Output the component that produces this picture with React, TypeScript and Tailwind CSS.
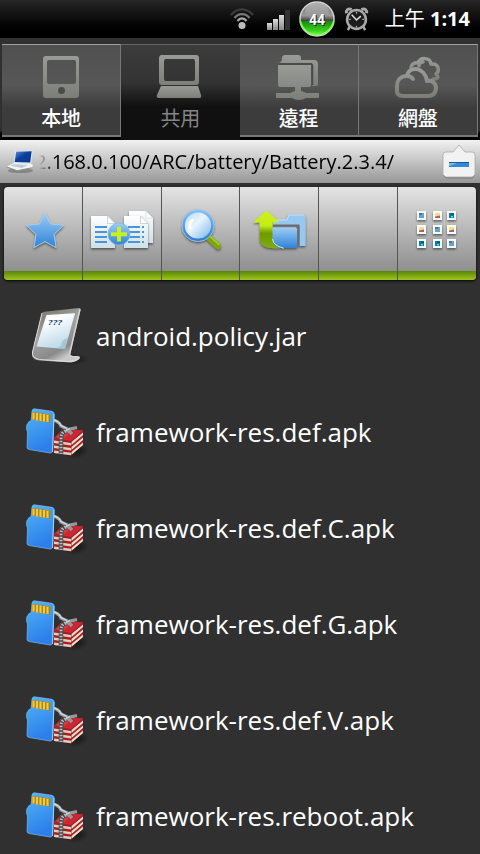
import type { ReactNode } from 'react';
import { clsx } from 'clsx';

const FONT = "font-['Open_Sans','Noto_Sans_CJK_TC',sans-serif]";
const PATH = '2.168.0.100/ARC/battery/Battery.2.3.4/';

function WifiIcon() {
  return (
    <svg width="24" height="24" viewBox="0 0 24 24" fill="none" aria-hidden="true">
      <path d="M1 8C7 0.500 17 0.500 23 8" stroke="#3c3c3c" strokeWidth="2.200" />
      <path d="M4.500 11C8.500 5.800 15.500 5.800 19.500 11" stroke="#777" strokeWidth="2.200" />
      <path d="M7.500 14C10 10.500 14 10.500 16.500 14" stroke="#aaa" strokeWidth="2.200" />
      <circle cx="12" cy="18.500" r="3.500" fill="#bdbdbd" />
    </svg>
  );
}

function SignalIcon() {
  return (
    <svg width="24" height="22" viewBox="0 0 24 22" aria-hidden="true">
      <defs>
        <linearGradient id="bars" x1="0" y1="0" x2="0" y2="1">
          <stop offset="0" stopColor="#ddd" />
          <stop offset="1" stopColor="#888" />
        </linearGradient>
      </defs>
      <rect x="1" y="15" width="5" height="7" fill="url(#bars)" />
      <rect x="7" y="11" width="5" height="11" fill="url(#bars)" />
      <rect x="13" y="7" width="5" height="15" fill="url(#bars)" />
      <rect x="19" y="2" width="5" height="20" fill="#333" />
    </svg>
  );
}

function BatteryIcon() {
  return (
    <svg width="38" height="38" viewBox="0 0 38 38" role="img" aria-label="Battery 44">
      <defs>
        <linearGradient id="orb" x1="0" y1="0" x2="0" y2="1">
          <stop offset="0" stopColor="#666" />
          <stop offset="0.400" stopColor="#999" />
          <stop offset="0.540" stopColor="#444" />
          <stop offset="0.570" stopColor="#198a0b" />
          <stop offset="0.850" stopColor="#39d51f" />
          <stop offset="1" stopColor="#8dff5b" />
        </linearGradient>
        <linearGradient id="gloss" x1="0" y1="0" x2="0" y2="1">
          <stop offset="0" stopColor="#c8c8c8" />
          <stop offset="1" stopColor="#888" />
        </linearGradient>
      </defs>
      <circle cx="19" cy="19" r="17" fill="url(#orb)" stroke="#d5d5d5" strokeWidth="1.500" />
      <path d="M2.300 21A17 17 0 0 0 35.700 21" fill="none" stroke="#7dfb55" strokeWidth="1.500" />
      <ellipse cx="19" cy="11" rx="12" ry="8.500" fill="url(#gloss)" opacity="0.750" />
      <g fontFamily="Roboto, sans-serif" fontSize="14" fontWeight="700" textAnchor="middle">
        <text x="20" y="26" fill="#222" aria-hidden="true">44</text>
        <text x="19" y="25" fill="#fff">44</text>
      </g>
    </svg>
  );
}

function AlarmIcon() {
  return (
    <svg width="25" height="26" viewBox="0 0 26 26" fill="none" stroke="#a9a9a9" aria-hidden="true">
      <path d="M2.500 7C2 4 4 1.500 8 3M23.500 7C24 4 22 1.500 18 3" strokeWidth="3" />
      <path d="M6 21l-2 3.500M20 21l2 3.500" strokeWidth="2.600" />
      <circle cx="13" cy="13.500" r="9.800" fill="#1c1c1c" strokeWidth="2.600" />
      <path d="M8 8.500l5 5.500 4.500-4" strokeWidth="1.600" stroke="#ddd" />
      <path d="M13 5.500v2M13 20v2M5 13.500h2M19 13.500h2" strokeWidth="1.300" />
    </svg>
  );
}

function Defs() {
  return (
    <svg className="absolute h-0 w-0" aria-hidden="true">
      <defs>
        <linearGradient id="metal" x1="0" y1="0" x2="0" y2="1">
          <stop offset="0" stopColor="#999b97" />
          <stop offset="1" stopColor="#7c7e7a" />
        </linearGradient>
        <linearGradient id="sky" x1="0" y1="0" x2="0" y2="1">
          <stop offset="0" stopColor="#9fcdf5" />
          <stop offset="1" stopColor="#2d83d8" />
        </linearGradient>
        <linearGradient id="sheet" x1="0" y1="0" x2="0" y2="1">
          <stop offset="0" stopColor="#ffffff" />
          <stop offset="1" stopColor="#cfe0e6" />
        </linearGradient>
        <linearGradient id="paper" x1="0.200" y1="0" x2="0.600" y2="1">
          <stop offset="0.200" stopColor="#ffffff" />
          <stop offset="1" stopColor="#b9d7e6" />
        </linearGradient>
        <linearGradient id="lime" x1="0" y1="0" x2="0" y2="1">
          <stop offset="0" stopColor="#cdf21c" />
          <stop offset="0.400" stopColor="#c4ec18" />
          <stop offset="0.600" stopColor="#6f9a00" />
          <stop offset="1" stopColor="#82ab0c" />
        </linearGradient>
        <linearGradient id="lens" x1="0" y1="0" x2="1" y2="1">
          <stop offset="0" stopColor="#b4d7f6" />
          <stop offset="0.450" stopColor="#e8f4fd" />
          <stop offset="1" stopColor="#6facea" />
        </linearGradient>
        <linearGradient id="ring" x1="0" y1="0" x2="0" y2="1">
          <stop offset="0" stopColor="#86bff2" />
          <stop offset="1" stopColor="#2b7fd6" />
        </linearGradient>
        <linearGradient id="card" x1="0" y1="0" x2="0.300" y2="1">
          <stop offset="0" stopColor="#55b4fa" />
          <stop offset="1" stopColor="#2a7fe8" />
        </linearGradient>
        <linearGradient id="stand" x1="0" y1="0" x2="0.500" y2="1">
          <stop offset="0" stopColor="#6e6a64" />
          <stop offset="0.500" stopColor="#a3a3a3" />
          <stop offset="0.850" stopColor="#8a8a8a" />
          <stop offset="1" stopColor="#c8c8c8" />
        </linearGradient>
        <linearGradient id="screen" x1="0" y1="0" x2="1" y2="1">
          <stop offset="0" stopColor="#5d8fd8" />
          <stop offset="0.450" stopColor="#0b3f9c" />
          <stop offset="1" stopColor="#0a3590" />
        </linearGradient>
        <radialGradient id="shade">
          <stop offset="0" stopColor="#000" stopOpacity="0.600" />
          <stop offset="1" stopColor="#000" stopOpacity="0" />
        </radialGradient>
        <filter id="drop" x="-20%" y="-20%" width="150%" height="150%">
          <feDropShadow dx="0" dy="1.500" stdDeviation="1" floodOpacity="0.500" />
        </filter>
      </defs>
    </svg>
  );
}

function LocalIcon() {
  return (
    <svg width="48" height="48" viewBox="0 0 48 48" aria-hidden="true">
      <path
        fill="url(#metal)"
        fillRule="evenodd"
        d="M9 3h30a3 3 0 0 1 3 3v36a3 3 0 0 1-3 3H9a3 3 0 0 1-3-3V6a3 3 0 0 1 3-3zM12 7a2 2 0 0 0-2 2v20a2 2 0 0 0 2 2h25a2 2 0 0 0 2-2V9a2 2 0 0 0-2-2z"
      />
      <circle cx="24.500" cy="37.500" r="3.500" fill="#4a4a4a" />
    </svg>
  );
}

function SharedIcon() {
  return (
    <svg width="48" height="48" viewBox="0 0 48 48" aria-hidden="true">
      <path
        fill="url(#metal)"
        fillRule="evenodd"
        d="M7 2h33a3 3 0 0 1 3 3v24a3 3 0 0 1-3 3H6a3 3 0 0 1-3-3V5a3 3 0 0 1 4-3zM10 6a2 2 0 0 0-2 2v18a2 2 0 0 0 2 2h27a2 2 0 0 0 2-2V8a2 2 0 0 0-2-2z"
      />
      <path d="M5 33h37l3 9a2 2 0 0 1-2 3H3a2 2 0 0 1-2-3z" fill="url(#metal)" />
    </svg>
  );
}

function RemoteIcon() {
  return (
    <svg width="48" height="48" viewBox="0 0 48 48" aria-hidden="true">
      <path d="M4 10q3-1 3-5 0-3 3-3h13q3 0 3 3v2h13q4 0 4 4v20q0 2-3 2h-3V10z" fill="url(#metal)" />
      <path d="M3 12h33v20q0 2-2 2H26v4q4 1 5 2h13v5H31q-3 2-7 2t-7-2H1v-5h14q2-1 5-2v-4H5q-2 0-2-2z" fill="url(#metal)" />
      <path d="M4 11h32q1.500 0 1.500 2v19" fill="none" stroke="#4a4a4a" strokeWidth="1.500" />
    </svg>
  );
}

function CloudIcon() {
  return (
    <svg width="48" height="48" viewBox="0 0 48 48" fill="none" stroke="url(#metal)" strokeLinecap="round" strokeLinejoin="round" aria-hidden="true">
      <path strokeWidth="3.500" d="M17 14c1-3 4-5 7-4 2-6 12-6 13 1 8-1 9 7 5 10 4 4 1 5-3 5M29 9q-4 0-4 4" />
      <path
        strokeWidth="4"
        d="M9 43h25c6 0 8-4 8-9-1-5-5-7-9-6C31 14 15 12 13 23 6 23 3 28 3 33v5c0 3 2 5 6 5zM13 23q4 0 6 3"
      />
    </svg>
  );
}

function LaptopIcon() {
  return (
    <svg width="30" height="26" viewBox="0 0 30 26" aria-hidden="true">
      <ellipse cx="15" cy="22" rx="13" ry="2.500" fill="#555" opacity="0.450" />
      <path d="M9.500 1.500L27.500 1 26 15 8 14z" fill="#dfe6ee" />
      <path d="M10.500 2.500L26.500 2 25 13.500 9 13z" fill="url(#screen)" />
      <path d="M8 14l18 1 2 1-1.500 3-15 3L.500 18z" fill="#f2f3f4" />
      <path d="M7.500 15.300l15 .9-6 3L4.500 17z" fill="#c3c8cc" />
      <path d="M.500 18l11 4 15-3" fill="none" stroke="#8c8c8c" />
    </svg>
  );
}

function StarIcon() {
  return (
    <svg width="64" height="64" viewBox="0 0 64 64" filter="url(#drop)" aria-hidden="true">
      <path
        d="M34 12.500l5.500 11.500 13 1.300-9.500 9 2 13.200-11-6-11 6 2-13.200-9.500-9 13-1.300z"
        fill="url(#sky)"
        stroke="#a9d2f5"
        strokeWidth="0.800"
        strokeLinejoin="round"
      />
    </svg>
  );
}

function SelectFilesIcon() {
  return (
    <svg width="66" height="64" viewBox="0 0 66 64" aria-hidden="true">
      <g filter="url(#drop)">
        <path d="M40 11h17l7 7v25H40z" fill="url(#sheet)" />
        <path d="M57 11v7h7z" fill="#fff" stroke="#c8d2d6" strokeWidth="0.600" />
      </g>
      <g filter="url(#drop)">
        <path d="M2 16h17l7 7v25H2zM35 16h17l7 7v25H35z" fill="url(#sheet)" />
        <path d="M18.500 16v7.500H26zM51.500 16v7.500H59z" fill="#fff" stroke="#b8c4c9" strokeWidth="0.700" />
      </g>
      <path
        d="M6 27h12M6 32h12M6 37h12M6 42h12M39 27h12M39 32h12M39 37h12M39 42h12M53 27h2M53 32h2M53 37h2M53 42h2"
        stroke="#4a94de"
        strokeWidth="2"
      />
      <circle cx="30" cy="34" r="11" fill="url(#sky)" stroke="#7db8ee" strokeWidth="0.800" />
      <path d="M30 27v14.500M22 34.200h16" stroke="#c9f01e" strokeWidth="4" />
    </svg>
  );
}

function SearchIcon() {
  return (
    <svg width="64" height="64" viewBox="0 0 64 64" filter="url(#drop)" aria-hidden="true">
      <path d="M40 38l9 8" stroke="#7da80a" strokeWidth="6" strokeLinecap="round" />
      <path d="M41 36.500l9.500 8.500" stroke="#a5d22a" strokeWidth="1.500" />
      <circle cx="29" cy="25.500" r="14.500" fill="url(#lens)" stroke="url(#ring)" strokeWidth="2.800" />
      <circle cx="29" cy="25.500" r="16" fill="none" stroke="#a7cff4" strokeWidth="0.700" />
      <path d="M21 28q-1-5 2.500-8" fill="none" stroke="#fff" strokeWidth="3" strokeLinecap="round" />
    </svg>
  );
}

function UpFolderIcon() {
  return (
    <svg width="64" height="64" viewBox="0 0 64 64" filter="url(#drop)" aria-hidden="true">
      <path d="M26 19.500h13.500l2-5H57q1.500 0 1.500 1.500v28.500q0 1.500-1.500 1.500h-4.500V26H26z" fill="#98c7f2" />
      <path d="M27 20h13l2-5h15" fill="none" stroke="#c5e0f8" />
      <path d="M26 25.500h25.500V46" fill="none" stroke="#6b6b6b" strokeWidth="2" />
      <path d="M25 27.500h24v1h1V47q0 1-1 1H25z" fill="url(#sky)" />
      <path d="M19.500 10.500L32.500 22.500h-7V39q0 6.500 7.500 9-20.300 1.500-20.300-9V22.500H6z" fill="url(#lime)" />
      <path d="M25.500 39q1 7 11 9" fill="none" stroke="#e6f5ba" strokeWidth="0.900" />
    </svg>
  );
}

const GRID_TILES = [
  'photo', 'sunset', 'globe',
  'sunset', 'photo', 'sunset',
  'globe', 'globe', 'photo',
];
const GRID_X = [12, 28, 42];

function GridIcon() {
  return (
    <svg width="64" height="64" viewBox="0 0 64 64" aria-hidden="true">
      {GRID_TILES.map((kind, i) => (
        <g key={i} transform={`translate(${GRID_X[i % 3]} ${11 + Math.floor(i / 3) * 14})`}>
          <rect width="9" height="9" fill="#f3fdff" filter="url(#drop)" />
          {kind === 'photo' && <path d="M2 2h5v5H2z" fill="#6b9fcd" />}
          {kind === 'photo' && <path d="M2 2h3v2H2z" fill="#4577b0" />}
          {kind === 'sunset' && <path d="M2 2h5v3H2z" fill="#f6dc84" />}
          {kind === 'sunset' && <path d="M2 5.500L7 4.500V7H2z" fill="#b8566c" />}
          {kind === 'globe' && <path d="M2 2h5v5H2z" fill="#087bb8" />}
          {kind === 'globe' && <path d="M4 2h3v2H4z" fill="#12625a" />}
          {kind === 'globe' && <path d="M4 5h2v1.500H4z" fill="#5ce0ff" />}
        </g>
      ))}
    </svg>
  );
}

function UnknownFileIcon() {
  return (
    <svg width="64" height="64" viewBox="0 0 64 64" aria-hidden="true">
      <ellipse cx="48" cy="55" rx="16" ry="6" fill="url(#shade)" />
      <path
        d="M17.500 10q.5-2 2.500-2.200L55 4q2 0 1.500 2L46 51q1 2.500 8 1.500 2.500-.5 2 1-1 3.500-9 5L15 56.500q-8-1-7-7z"
        fill="url(#stand)"
      />
      <path d="M56 5L45.500 50.500q1 3 9 2" fill="none" stroke="#d5d5d5" strokeWidth="1.500" />
      <path d="M18 9L8.500 48q-1 6 7 7.500L46 57.500q7-1 9.500-3.500" fill="none" stroke="#dedede" strokeWidth="1" />
      <path d="M22.500 11L51 9.300 41 45 12.500 42.500z" fill="url(#paper)" />
      <path d="M44 34l-3 11q-3 .5-8-.700 5-1.500 5-6 2-4 6-4.300z" fill="#9bbccb" opacity="0.700" />
      <text
        x="24"
        y="21"
        fontFamily="DejaVu Serif, serif"
        fontSize="8"
        fontWeight="700"
        fontStyle="italic"
        fill="#17396f"
      >
        ???
      </text>
    </svg>
  );
}

function ApkIcon() {
  return (
    <svg width="64" height="64" viewBox="0 0 64 64" aria-hidden="true">
      <ellipse cx="50" cy="50" rx="15" ry="9" fill="url(#shade)" />
      <path d="M30 38L40 28.500l19 2v14.500L47 55.500 30 53z" fill="#a81c26" />
      <path d="M30 38L40 28.500l19 2L47 41z" fill="#c92733" />
      <path d="M38 31l8 1-6 6.500-8-1.200z" fill="#e2444c" opacity="0.700" />
      <path d="M47.500 42l11.500-9.500v2.500L47.500 45zM47.500 47l11.500-9.500V40L47.500 50zM47.500 52l11.500-9.500V45L47.500 54.800z" fill="#eadfce" />
      <path d="M30 40.500l17 2.500v2.500L30 43zM30 45.500l17 2.500v2.500L30 48zM30 50.500l17 2.300v2.400L30 53z" fill="#e0cfbd" />
      <path d="M29 20q6 1.500 8 6l6 3M37 33l9-4 7-1.500M42 28l6 6" fill="none" stroke="#8f9c9e" strokeWidth="3.200" />
      <path d="M29 19.500q6 1.500 8 6l6 3M38 32l8-3.500" fill="none" stroke="#d3dddd" strokeWidth="1.300" />
      <path d="M42 31q-5 1-5 8v15" fill="none" stroke="#44494b" strokeWidth="4.500" />
      <path d="M42 31q-5 1-5 8v15" fill="none" stroke="#b9c0c2" strokeWidth="3" strokeDasharray="1.500 1.500" />
      <path
        d="M8 11q.3-2.300 2.500-2.200l17.500 2.500q2.300.500 2.200 2.700L28.500 51q-.3 2.300-2.500 2L5 49.500q-2-.5-2-2.500l.5-15L2.500 29l.3-4L5 21.500l2-.5z"
        fill="url(#card)"
        stroke="#86c6f9"
        strokeWidth="0.600"
      />
      <path d="M30 14L28.500 52" stroke="#9fd2fa" strokeWidth="1" />
      <path d="M8.300 12l18.200 2.400-.5 8L8 19.500z" fill="#a1801c" />
      <path d="M9.500 12.500v7M13 13v7.500M16.500 13.500v7.500M20 14v7.500M23.500 14.500v7.500" stroke="#f0c93c" strokeWidth="2.200" />
    </svg>
  );
}

interface Tab {
  label: string;
  icon: ReactNode;
  active?: boolean;
}

const TABS: Tab[] = [
  { label: '本地', icon: <LocalIcon /> },
  { label: '共用', icon: <SharedIcon />, active: true },
  { label: '遠程', icon: <RemoteIcon /> },
  { label: '網盤', icon: <CloudIcon /> },
];

const TOOLS: { label: string; icon: ReactNode }[] = [
  { label: 'Favorites', icon: <StarIcon /> },
  { label: 'Select files', icon: <SelectFilesIcon /> },
  { label: 'Search', icon: <SearchIcon /> },
  { label: 'Up', icon: <UpFolderIcon /> },
  { label: 'More', icon: null },
  { label: 'View', icon: <GridIcon /> },
];

const FILES = [
  'android.policy.jar',
  'framework-res.def.apk',
  'framework-res.def.C.apk',
  'framework-res.def.G.apk',
  'framework-res.def.V.apk',
  'framework-res.reboot.apk',
];

function StatusBar() {
  return (
    <header className="flex h-[38px] items-center justify-end bg-linear-to-b from-[#262626] via-[#0c0c0c] to-black pr-2.5 text-white">
      <WifiIcon />
      <span className="ml-3"><SignalIcon /></span>
      <span className="ml-2"><BatteryIcon /></span>
      <span className="ml-2"><AlarmIcon /></span>
      <span className="ml-4 text-xl leading-6 whitespace-nowrap">
        上午 <b>1:14</b>
      </span>
    </header>
  );
}

function TabButton({ tab }: { tab: Tab }) {
  return (
    <button
      type="button"
      role="tab"
      aria-selected={!!tab.active}
      className={clsx(
        'flex flex-1 flex-col items-center gap-1 border-t pt-2 text-xl',
        tab.active
          ? 'h-24 border-[#666] bg-linear-to-b from-[#3c3c3c] from-0% via-[#333] via-40% to-[#101010] to-65% text-[#858585]'
          : 'h-[93px] border-r border-b-2 border-t-[#a0a0a0] border-r-[#777] border-b-[#777] bg-linear-to-b from-[#505050] via-[#575757] via-45% to-[#3c3c3c] to-70% text-white',
      )}
    >
      {tab.icon}
      <span className={clsx('leading-7', !tab.active && 'font-medium')}>{tab.label}</span>
    </button>
  );
}

function PathBar() {
  return (
    <div className="flex h-[43px] items-center bg-linear-to-b from-[#f2f2f2] to-[#979797] pl-1.5">
      <LaptopIcon />
      <div className="flex flex-1 justify-end mask-l-from-95% mask-l-to-99% pr-12 text-xl leading-7 whitespace-nowrap text-black">
        {PATH}
      </div>
      <button type="button" aria-label="Collapse" className="mr-1 self-start pt-1">
        <svg width="34" height="36" viewBox="0 0 34 36" aria-hidden="true">
          <path
            d="M4 8h7l6-7 6 7h7q3 0 3 3v19q0 3-3 3H4q-3 0-3-3V11q0-3 3-3z"
            fill="#f2f2f2"
            stroke="#aaa"
            strokeWidth="0.800"
          />
          <path d="M1.500 31q1 3 4 3h23q3 0 4-3" fill="none" stroke="#777" strokeWidth="0.800" />
          <path d="M7 18h20v5H7z" fill="#3689da" />
          <path d="M7 18h20v1H7z" fill="#1c5a94" />
          <path d="M7 19h8l-8 3z" fill="#86bdf0" />
        </svg>
      </button>
    </div>
  );
}

function Toolbar() {
  return (
    <div
      role="toolbar"
      className="mx-1 mt-1 flex h-[93px] overflow-hidden rounded-[4px] bg-linear-to-b from-[#e4e4e4] to-[#8f8f8f] to-90% shadow-[0_1px_3px_#000]"
    >
      {TOOLS.map((tool, i) => (
        <button
          key={tool.label}
          type="button"
          aria-label={tool.label}
          className={clsx('flex flex-1 flex-col', i < TOOLS.length - 1 && 'border-r border-[#555]')}
        >
          <span className="flex w-full flex-1 items-center justify-center pt-1.5">{tool.icon}</span>
          <span className="h-[9px] w-full bg-linear-to-b from-[#5a8508] to-[#9ec51c]" />
        </button>
      ))}
    </div>
  );
}

export default function App() {
  return (
    <div className={clsx('min-h-screen bg-[#303030]', FONT)}>
      <Defs />
      <StatusBar />
      <nav role="tablist" className="mt-1.5 flex h-24 bg-linear-to-b from-[#303030] from-90% to-black to-95% px-0.5">
        {TABS.map((tab) => (
          <TabButton key={tab.label} tab={tab} />
        ))}
      </nav>
      <PathBar />
      <Toolbar />
      <ul className="mt-2">
        {FILES.map((name) => (
          <li key={name} className="flex h-24 items-center pl-6">
            {name.endsWith('.apk') ? <ApkIcon /> : <UnknownFileIcon />}
            <span className="ml-2 text-[26px] leading-9 text-white">{name}</span>
          </li>
        ))}
      </ul>
    </div>
  );
}
